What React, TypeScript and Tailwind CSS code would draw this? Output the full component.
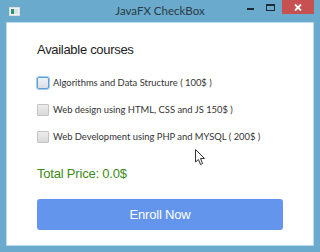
import { useState } from "react";

const courses = [
  { id: "algo", label: "Algorithms and Data Structure ( 100$ )", price: 100 },
  { id: "web", label: "Web design using HTML, CSS and JS 150$ )", price: 150 },
  { id: "php", label: "Web Development using PHP and MYSQL ( 200$ )", price: 200 },
];

const WindowIcon = () => (
  <svg width="11" height="9" viewBox="0 0 11 9">
    <rect x="0.5" y="0.5" width="10" height="8" fill="#f2f2f2" stroke="#dcdcdc" />
    <rect x="2" y="2" width="3" height="5" fill="#2f8f6f" />
    <rect x="5" y="2" width="4" height="5" fill="#cfe3ea" />
  </svg>
);

const Cursor = () => (
  <svg width="12" height="18" viewBox="0 0 12 18" className="absolute left-[195px] top-[149px]">
    <path d="M0.5 0.5 L0.5 13 L3.5 10.5 L5.5 15.5 L7.5 14.5 L5.5 9.5 L9.5 9.5 Z" fill="#fff" stroke="#333" strokeWidth="1" strokeLinejoin="round" />
  </svg>
);

const App = () => {
  const [checked, setChecked] = useState<Record<string, boolean>>({});
  const total = courses.reduce((sum, c) => (checked[c.id] ? sum + c.price : sum), 0);

  return (
    <div className="relative w-[320px] h-[252px] bg-[#6aaacd] flex flex-col overflow-hidden" style={{ fontFamily: '"Liberation Sans", Arial, sans-serif' }}>
      {/* title bar */}
      <div className="h-[22px] flex items-center relative shrink-0">
        <div className="pl-[9px] pt-[1px]">
          <WindowIcon />
        </div>
        <div className="absolute left-0 right-0 top-0 h-[22px] flex items-center justify-center text-[11.5px] text-[#2b3a44]" style={{ fontFamily: 'Lato, sans-serif' }}>
          JavaFX CheckBox
        </div>
        <div className="ml-auto flex items-start h-full">
          <div className="w-[20px] h-[14px] flex items-end justify-center pb-[4px]">
            <div className="w-[7px] h-[2px] bg-[#1c2a33]" />
          </div>
          <div className="w-[20px] h-[14px] flex items-center justify-center">
            <div className="w-[9px] h-[7px] border border-[#1c2a33] border-t-2" />
          </div>
          <div className="w-[32px] h-[14px] bg-[#c75050] flex items-center justify-center mr-[6px] ml-[2px]">
            <svg width="8" height="7" viewBox="0 0 8 7">
              <path d="M1 0.5 L7 6.5 M7 0.5 L1 6.5" stroke="#fff" strokeWidth="1.8" />
            </svg>
          </div>
        </div>
      </div>

      {/* client area */}
      <div className="mx-[6px] mb-[6px] flex-1 bg-white border border-[#b9dbee] flex flex-col pl-[30px] pr-[30px]">
        <div className="mt-[19px] text-[13px] leading-[16px] tracking-[-0.3px] text-[#222]">Available courses</div>

        <div className="mt-[19px] flex flex-col gap-[15px]">
          {courses.map((c, i) => (
            <label key={c.id} className="flex items-center h-[12px] cursor-default">
              <input
                type="checkbox"
                className="sr-only"
                checked={!!checked[c.id]}
                onChange={() => setChecked({ ...checked, [c.id]: !checked[c.id] })}
              />
              <span
                className={
                  i === 0
                    ? "w-[12px] h-[12px] shrink-0 rounded-[2px] border border-[#5a9fd8] bg-gradient-to-b from-[#eef3f8] to-[#dcdfe3] shadow-[0_0_0_1px_#a9cdeb]"
                    : "w-[12px] h-[12px] shrink-0 rounded-[1px] border border-[#c4c4c4] bg-gradient-to-b from-[#ececec] to-[#dadada]"
                }
              />
              <span className="ml-[4px] whitespace-nowrap text-[9.4px] text-[#333]" style={{ fontFamily: 'Lato, sans-serif' }}>
                {c.label}
              </span>
            </label>
          ))}
        </div>

        <div className="mt-[23px] text-[13px] leading-[16px] tracking-[-0.2px] text-[#3d8a16]">Total Price: {total.toFixed(1)}$</div>

        <button className="mt-[17px] w-[246px] h-[31px] rounded-[3px] bg-[#6495ed] text-white text-[13px] tracking-[-0.2px]">
          Enroll Now
        </button>
      </div>

      <Cursor />
    </div>
  );
};

export default App;
